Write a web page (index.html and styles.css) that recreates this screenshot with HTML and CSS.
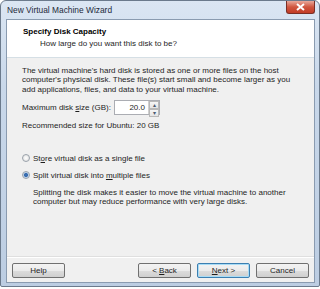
FILE: index.html
```html
<!DOCTYPE html>
<html lang="en">

<head>
    <meta charset="UTF-8">
    <title>New Virtual Machine Wizard</title>
    <link rel="stylesheet" href="styles.css">
</head>

<body>
    <div class="window">
        <div class="titlebar">
            <span class="titlebar__text">New Virtual Machine Wizard</span>
            <div class="titlebar__close">
                <svg width="9" height="8" viewBox="0 0 9 8">
                    <path d="M1 1 L8 7 M8 1 L1 7" stroke="#fff" stroke-width="2" />
                </svg>
            </div>
        </div>
        <div class="client">
            <div class="header">
                <div class="header__title">Specify Disk Capacity</div>
                <div class="header__sub">How large do you want this disk to be?</div>
            </div>
            <div class="content">
                <p class="content__text">The virtual machine's hard disk is stored as one or more files on the host<br>
                    computer's physical disk. These file(s) start small and become larger as you<br>
                    add applications, files, and data to your virtual machine.</p>
                <div class="size">
                    <span class="size__label">Maximum disk <u>s</u>ize (GB):</span>
                    <div class="spin">
                        <span class="spin__value">20.0</span>
                        <div class="spin__buttons">
                            <div class="spin__btn">&#9652;</div>
                            <div class="spin__btn">&#9662;</div>
                        </div>
                    </div>
                </div>
                <div class="content__text">Recommended size for Ubuntu: 20 GB</div>

                <div class="radio radio--first">
                    <span class="radio__dot"></span>
                    <span>St<u>o</u>re virtual disk as a single file</span>
                </div>
                <div class="radio">
                    <span class="radio__dot radio__dot--on"></span>
                    <span>Split virtual disk into <u>m</u>ultiple files</span>
                </div>
                <p class="radio__desc">Splitting the disk makes it easier to move the virtual machine to another<br>
                    computer but may reduce performance with very large disks.</p>
            </div>
            <div class="footer">
                <button class="btn">Help</button>
                <div class="footer__right">
                    <button class="btn">&lt; <u>B</u>ack</button>
                    <button class="btn btn--default"><u>N</u>ext &gt;</button>
                    <button class="btn">Cancel</button>
                </div>
            </div>
        </div>
    </div>
</body>

</html>
```

FILE: styles.css
```css
* {
    box-sizing: border-box;
}

body {
    margin: 0;
    padding: 0;
    background-color: #fff;
    font-family: 'Liberation Sans', Arial, sans-serif;
    font-size: 8px;
    color: #1e1e1e;
}

.window {
    width: 320px;
    height: 287px;
    display: flex;
    flex-direction: column;
    background: linear-gradient(#dbe6f3, #c9d8ea 30%, #bccde2);
    border: 1px solid #6b7a8c;
    border-radius: 6px 6px 2px 2px;
}

.titlebar {
    height: 18px;
    display: flex;
    align-items: flex-start;
    justify-content: space-between;
    padding-left: 6px;
    padding-right: 4px;
}

.titlebar__text {
    font-size: 8.4px;
    color: #1e2a3a;
    margin-top: 4px;
}

.titlebar__close {
    width: 29px;
    height: 13px;
    display: flex;
    align-items: center;
    justify-content: center;
    background: linear-gradient(#e9a99b, #d0563f 50%, #c23c26);
    border: 1px solid #7a2f25;
    border-top: none;
    border-radius: 0 0 3px 3px;
}

.client {
    flex: 1;
    margin: 0 4px 3px 5px;
    display: flex;
    flex-direction: column;
    background-color: #f0f0f0;
    border: 1px solid #8a9bb0;
}

.header {
    height: 38px;
    background-color: #fff;
    border-bottom: 1px solid #d5dfe5;
    padding: 7px 0 0 16px;
}

.header__title {
    font-weight: bold;
    color: #000;
}

.header__sub {
    margin-top: 3px;
    padding-left: 17px;
}

.content {
    flex: 1;
    padding: 8px 0 0 15px;
}

.content__text {
    margin: 0;
    line-height: 9.4px;
}

.size {
    display: grid;
    grid-template-columns: 92px 46px;
    align-items: center;
    margin: 6px 0 6px;
}

.size__label {
    white-space: nowrap;
}

.spin {
    height: 15px;
    display: flex;
    background-color: #fff;
    border: 1px solid #abadb3;
}

.spin__value {
    flex: 1;
    text-align: right;
    padding-right: 3px;
    line-height: 13px;
}

.spin__buttons {
    width: 11px;
    display: flex;
    flex-direction: column;
    border-left: 1px solid #d0d0d0;
}

.spin__btn {
    flex: 1;
    font-size: 6px;
    line-height: 6px;
    text-align: center;
    color: #4a5a70;
    background: linear-gradient(#f6f6f6, #e4e4e4);
    border: 1px solid #b8b8b8;
}

.radio {
    display: flex;
    align-items: center;
    column-gap: 3px;
    margin-top: 8px;
}

.radio--first {
    margin-top: 23px;
}

.radio__dot {
    width: 8px;
    height: 8px;
    border-radius: 50%;
    border: 1px solid #9aa2ab;
    background: radial-gradient(#fff, #dcdcdc);
}

.radio__dot--on {
    background: radial-gradient(circle, #3a6eb0 0 1.6px, #bcd0e8 2.4px, #eef2f6);
}

.radio__desc {
    margin: 8px 0 0 11px;
    line-height: 9.4px;
}

.footer {
    height: 26px;
    display: flex;
    align-items: center;
    justify-content: space-between;
    padding: 2px 5px 0;
    border-top: 1px solid #dfdfdf;
    box-shadow: inset 0 1px 0 #fff;
}

.footer__right {
    display: flex;
    column-gap: 6px;
}

.btn {
    width: 53px;
    height: 15px;
    padding: 0;
    font-family: inherit;
    font-size: 8px;
    color: #1e1e1e;
    background: linear-gradient(#f3f3f3, #ebebeb 50%, #dddddd 50%, #cfcfcf);
    border: 1px solid #707070;
    border-radius: 2px;
}

.btn--default {
    border-color: #3c7fb1;
    box-shadow: inset 0 0 0 1px #a8dcf6;
}
```
